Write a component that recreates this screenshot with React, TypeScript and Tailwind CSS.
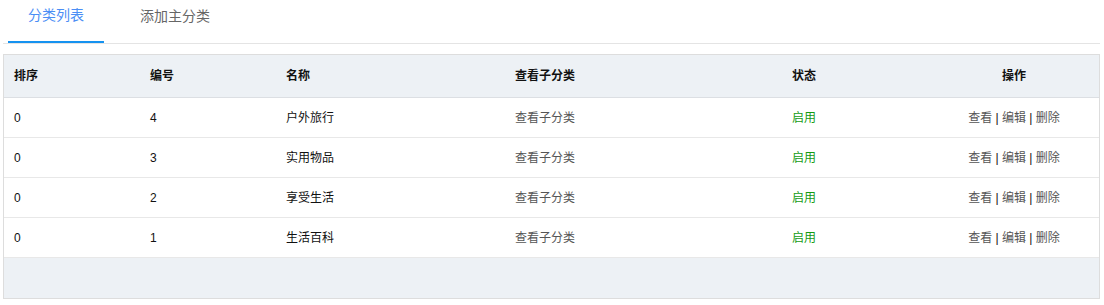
import React from "react";

const rows = [
  { sort: "0", id: "4", name: "户外旅行" },
  { sort: "0", id: "3", name: "实用物品" },
  { sort: "0", id: "2", name: "享受生活" },
  { sort: "0", id: "1", name: "生活百科" },
];

const grid = "grid grid-cols-[136px_136px_229px_174px_250px_1fr]";

export default function App() {
  return (
    <div
      className="w-[1104px] h-[305px] bg-white pl-[3px] pr-[4px]"
      style={{ fontFamily: '"Liberation Sans", "Noto Sans CJK SC", sans-serif' }}
    >
      <div className="flex h-[44px] border-b border-[#e4e4e4]">
        <div className="ml-[5px] w-[96px] h-[43px] flex items-center justify-center pb-[10px] text-[14px] text-[#4b8ef5] border-b-2 border-[#1592f0]">
          分类列表
        </div>
        <div className="ml-[16px] px-5 h-[43px] flex items-center pb-[10px] text-[14px] text-[#666]">
          添加主分类
        </div>
      </div>
      <div className="mt-[10px] border border-[#dddddd] text-[12px] text-[#111]">
        <div className={`${grid} h-[43px] bg-[#edf1f5] border-b border-[#dcdfe3] font-bold items-center`}>
          <div className="pl-[10px]">排序</div>
          <div className="pl-[10px]">编号</div>
          <div className="pl-[10px]">名称</div>
          <div className="pl-[10px]">查看子分类</div>
          <div className="text-center">状态</div>
          <div className="text-center">操作</div>
        </div>
        {rows.map((r) => (
          <div key={r.id} className={`${grid} h-[40px] border-b border-[#e8e8e8] items-center`}>
            <div className="pl-[10px]">{r.sort}</div>
            <div className="pl-[10px]">{r.id}</div>
            <div className="pl-[10px]">{r.name}</div>
            <div className="pl-[10px] text-[#555]">查看子分类</div>
            <div className="text-center text-[#139b13]">启用</div>
            <div className="text-center text-[#555]">
              查看 <span className="text-[#111]">|</span> 编辑 <span className="text-[#111]">|</span> 删除
            </div>
          </div>
        ))}
        <div className="h-[40px] bg-[#edf1f5]" />
      </div>
    </div>
  );
}
